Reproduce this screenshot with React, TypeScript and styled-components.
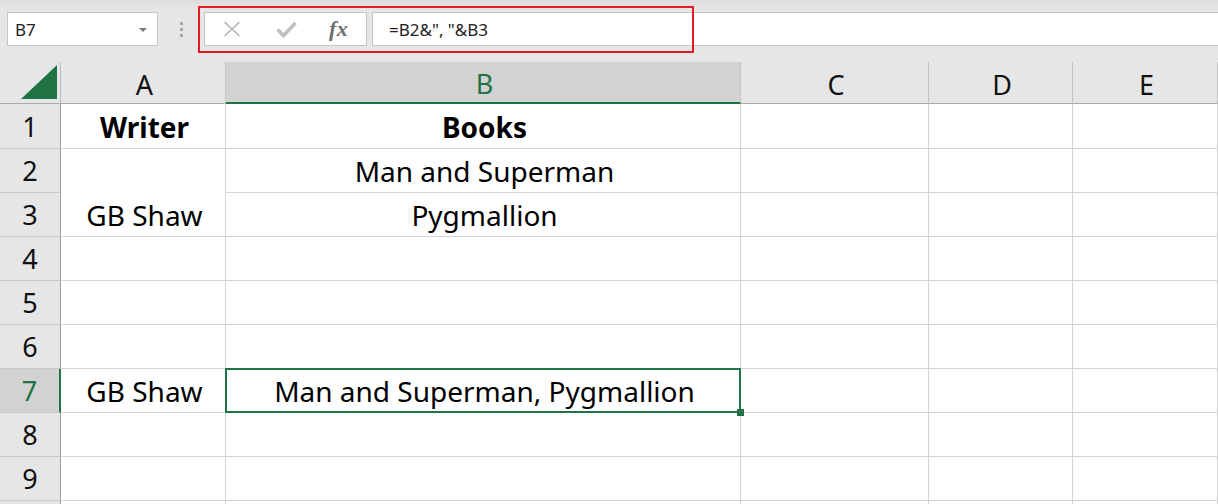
import React from "react";
import styled, { createGlobalStyle, css } from "styled-components";

const GREEN = "#217346";

const GlobalStyle = createGlobalStyle`
  html, body { margin: 0; padding: 0; background: #ffffff; overflow: hidden; }
  body { font-family: "Noto Sans", "Open Sans", sans-serif; }
  * { box-sizing: border-box; }
`;

const Page = styled.div`
  width: 1218px;
  height: 504px;
  overflow: hidden;
  display: flex;
  flex-direction: column;
`;

/* ---------- Formula bar ---------- */
const Toolbar = styled.div`
  position: relative;
  height: 62px;
  flex: none;
  display: flex;
  align-items: flex-start;
  padding: 12px 0 0 7px;
  background: linear-gradient(#dcdcdc 0px, #e6e6e6 10px, #e6e6e6 100%);
`;

const NameBox = styled.div`
  width: 151px;
  height: 34px;
  background: #fff;
  border: 1px solid #c6c6c6;
  display: flex;
  align-items: center;
  justify-content: space-between;
  padding: 0 10px 0 7px;
  font-size: 17px;
  color: #222;
`;

const Caret = styled.span`
  width: 0;
  height: 0;
  border-left: 4px solid transparent;
  border-right: 4px solid transparent;
  border-top: 4px solid #7a7a7a;
  margin-top: 2px;
`;

const Grip = styled.div`
  width: 46px;
  height: 34px;
  display: flex;
  flex-direction: column;
  align-items: center;
  justify-content: center;
  gap: 3px;
`;

const Dot = styled.span`
  width: 3px;
  height: 3px;
  background: #a6a6a6;
`;

const FxButtons = styled.div`
  width: 163px;
  height: 34px;
  background: #fff;
  border: 1px solid #c6c6c6;
  display: flex;
  align-items: center;
  padding-left: 18px;
`;

const IconSlot = styled.span<{ $w: number }>`
  width: ${(p) => p.$w}px;
  display: flex;
  align-items: center;
  justify-content: flex-start;
`;

const FxLabel = styled.span`
  font-family: "Liberation Serif", "DejaVu Serif", serif;
  font-style: italic;
  font-weight: 700;
  font-size: 22px;
  color: #6e6e6e;
  letter-spacing: 0.5px;
  line-height: 1;
  margin-top: -1px;
`;

const FormulaInput = styled.div`
  flex: 1;
  margin-left: 5px;
  height: 34px;
  background: #fff;
  border: 1px solid #c6c6c6;
  border-right: none;
  display: flex;
  align-items: center;
  padding-left: 16px;
  font-size: 17px;
  color: #222;
  white-space: pre;
`;

const Highlight = styled.div`
  position: absolute;
  left: 198px;
  top: 6px;
  width: 496px;
  height: 47px;
  border: 2px solid #e41b23;
  pointer-events: none;
`;

/* ---------- Sheet ---------- */
const Sheet = styled.div`
  display: grid;
  grid-template-columns: 61px 165px 515px 188px 144px 145px;
  grid-template-rows: 42px 45px repeat(9, 44px);
  font-size: 28px;
  color: #000;
`;

const Corner = styled.div`
  background: #e6e6e6;
  border-right: 1px solid #bcbcbc;
  border-bottom: 1px solid #ababab;
  display: flex;
  align-items: flex-end;
  justify-content: flex-end;
  padding: 0 3px 4px 0;
`;

const ColHeader = styled.div<{ $active?: boolean }>`
  background: #e6e6e6;
  border-right: 1px solid #c4c4c4;
  border-bottom: 1px solid #ababab;
  display: flex;
  align-items: center;
  justify-content: center;
  padding: 3px 0 0 3px;
  font-size: 27px;
  color: #111;
  ${(p) =>
    p.$active &&
    css`
      background: #d2d2d2;
      border-bottom: 2px solid ${GREEN};
      color: ${GREEN};
    `}
`;

const RowHeader = styled.div<{ $active?: boolean }>`
  background: #e6e6e6;
  border-right: 1px solid #9e9e9e;
  border-bottom: 1px solid #c8c8c8;
  display: flex;
  align-items: flex-end;
  justify-content: center;
  padding-bottom: 7px;
  font-size: 27px;
  line-height: 28px;
  color: #111;
  ${(p) =>
    p.$active &&
    css`
      background: #d2d2d2;
      border-right: 2px solid ${GREEN};
      color: ${GREEN};
    `}
`;

const Cell = styled.div<{ $bold?: boolean; $span?: number; $selected?: boolean }>`
  position: relative;
  background: #fff;
  border-right: 1px solid #d4d4d4;
  border-bottom: 1px solid #d4d4d4;
  display: flex;
  align-items: flex-end;
  justify-content: center;
  padding: 0 0 7px 3px;
  line-height: 28px;
  white-space: nowrap;
  font-weight: ${(p) => (p.$bold ? 700 : 400)};
  ${(p) => p.$span && css`grid-row: span ${p.$span};`}
  ${(p) =>
    p.$selected &&
    css`
      &::after {
        content: "";
        position: absolute;
        left: -1px;
        top: -1px;
        right: -1px;
        bottom: -1px;
        border: 2px solid ${GREEN};
        pointer-events: none;
      }
      &::before {
        content: "";
        position: absolute;
        right: -4px;
        bottom: -4px;
        width: 7px;
        height: 7px;
        background: ${GREEN};
        z-index: 2;
      }
    `}
`;

type CellDef = { text?: string; bold?: boolean; span?: number; selected?: boolean };
type RowDef = { n: number; label: string; cells: CellDef[] };

const rows: RowDef[] = [
  { n: 1, label: "1", cells: [{ text: "Writer", bold: true }, { text: "Books", bold: true }, {}, {}, {}] },
  { n: 2, label: "2", cells: [{ text: "GB Shaw", span: 2 }, { text: "Man and Superman" }, {}, {}, {}] },
  { n: 3, label: "3", cells: [{ text: "Pygmallion" }, {}, {}, {}] },
  { n: 4, label: "4", cells: [{}, {}, {}, {}, {}] },
  { n: 5, label: "5", cells: [{}, {}, {}, {}, {}] },
  { n: 6, label: "6", cells: [{}, {}, {}, {}, {}] },
  { n: 7, label: "7", cells: [{ text: "GB Shaw" }, { text: "Man and Superman, Pygmallion", selected: true }, {}, {}, {}] },
  { n: 8, label: "8", cells: [{}, {}, {}, {}, {}] },
  { n: 9, label: "9", cells: [{}, {}, {}, {}, {}] },
  { n: 10, label: "", cells: [{}, {}, {}, {}, {}] },
];

const columns = ["A", "B", "C", "D", "E"];

const CancelIcon = () => (
  <svg width="18" height="16" viewBox="0 0 18 16">
    <path d="M1.5 1 L16.5 15 M16.5 1 L1.5 15" stroke="#b3b3b3" strokeWidth="1.7" fill="none" />
  </svg>
);

const EnterIcon = () => (
  <svg width="21" height="17" viewBox="0 0 21 17">
    <path d="M1.5 8.5 L7.5 14.5 L19.5 2" stroke="#bfbfbf" strokeWidth="3.6" fill="none" strokeLinejoin="miter" />
  </svg>
);

const CornerTriangle = () => (
  <svg width="36" height="34" viewBox="0 0 36 34">
    <polygon points="36,0 36,34 0,34" fill={GREEN} />
  </svg>
);

export default function App() {
  return (
    <Page>
      <GlobalStyle />
      <Toolbar>
        <NameBox>
          B7
          <Caret />
        </NameBox>
        <Grip>
          <Dot />
          <Dot />
          <Dot />
        </Grip>
        <FxButtons>
          <IconSlot $w={53}>
            <CancelIcon />
          </IconSlot>
          <IconSlot $w={53}>
            <EnterIcon />
          </IconSlot>
          <IconSlot $w={30}>
            <FxLabel>fx</FxLabel>
          </IconSlot>
        </FxButtons>
        <FormulaInput>{'=B2&", "&B3'}</FormulaInput>
        <Highlight />
      </Toolbar>

      <Sheet>
        <Corner>
          <CornerTriangle />
        </Corner>
        {columns.map((c) => (
          <ColHeader key={c} $active={c === "B"}>
            {c}
          </ColHeader>
        ))}
        {rows.map((r) => (
          <React.Fragment key={r.n}>
            <RowHeader $active={r.n === 7}>{r.label}</RowHeader>
            {r.cells.map((c, i) => (
              <Cell key={i} $bold={c.bold} $span={c.span} $selected={c.selected}>
                {c.text}
              </Cell>
            ))}
          </React.Fragment>
        ))}
      </Sheet>
    </Page>
  );
}
